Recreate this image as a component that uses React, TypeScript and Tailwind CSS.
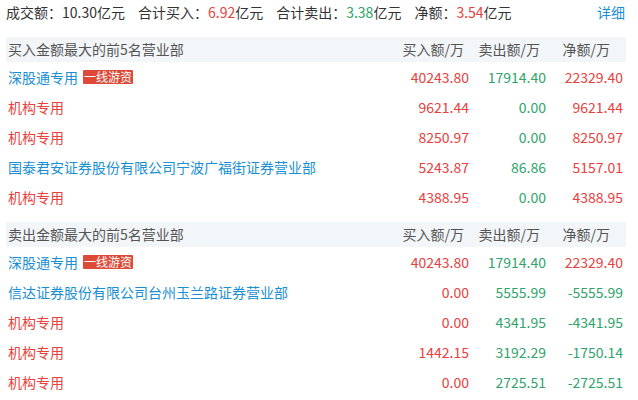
import React from 'react';

type Row = {
  name: string;
  kind: 'blue' | 'red';
  badge?: string;
  buy: string;
  sell: string;
  net: string;
};

const buyRows: Row[] = [
  { name: '深股通专用', kind: 'blue', badge: '一线游资', buy: '40243.80', sell: '17914.40', net: '22329.40' },
  { name: '机构专用', kind: 'red', buy: '9621.44', sell: '0.00', net: '9621.44' },
  { name: '机构专用', kind: 'red', buy: '8250.97', sell: '0.00', net: '8250.97' },
  { name: '国泰君安证券股份有限公司宁波广福街证券营业部', kind: 'blue', buy: '5243.87', sell: '86.86', net: '5157.01' },
  { name: '机构专用', kind: 'red', buy: '4388.95', sell: '0.00', net: '4388.95' },
];

const sellRows: Row[] = [
  { name: '深股通专用', kind: 'blue', badge: '一线游资', buy: '40243.80', sell: '17914.40', net: '22329.40' },
  { name: '信达证券股份有限公司台州玉兰路证券营业部', kind: 'blue', buy: '0.00', sell: '5555.99', net: '-5555.99' },
  { name: '机构专用', kind: 'red', buy: '0.00', sell: '4341.95', net: '-4341.95' },
  { name: '机构专用', kind: 'red', buy: '1442.15', sell: '3192.29', net: '-1750.14' },
  { name: '机构专用', kind: 'red', buy: '0.00', sell: '2725.51', net: '-2725.51' },
];

const RED = 'text-[#e8413d]';
const GREEN = 'text-[#30a46c]';

function netColor(v: string) {
  return v.startsWith('-') ? GREEN : RED;
}

function Section({ title, rows }: { title: string; rows: Row[] }) {
  return (
    <div>
      <div className="ml-[6px] mr-[12px] h-[25px] bg-[#f3f6f9] flex items-center pl-[2px] pr-[3px] text-[#555]">
        <div className="flex-1">{title}</div>
        <div className="w-[77px] text-right pr-[5px]">买入额/万</div>
        <div className="w-[77px] text-right pr-[6px]">卖出额/万</div>
        <div className="w-[77px] text-right pr-[13px]">净额/万</div>
      </div>
      <div className="pl-[8px] pr-[15px]">
        {rows.map((r, i) => (
          <div key={i} className="h-[30px] flex items-center">
            <div className="flex-1 flex items-center min-w-0">
              <span className={r.kind === 'blue' ? 'text-[#1a8fd5]' : RED}>{r.name}</span>
              {r.badge && (
                <span className="ml-[5px] bg-[#dd4a38] text-white text-[12px] leading-[14px] px-[1px] rounded-[1px]">
                  {r.badge}
                </span>
              )}
            </div>
            <div className={`w-[77px] text-right ${RED}`}>{r.buy}</div>
            <div className={`w-[77px] text-right ${GREEN}`}>{r.sell}</div>
            <div className={`w-[77px] text-right ${netColor(r.net)}`}>{r.net}</div>
          </div>
        ))}
      </div>
    </div>
  );
}

export default function App() {
  return (
    <div
      className="w-[638px] h-[400px] bg-white overflow-hidden text-[14px] text-[#333]"
      style={{ fontFamily: '"Noto Sans CJK SC", "Noto Sans", sans-serif' }}
    >
      <div className="h-[25px] flex items-center pl-[6px] pr-[13px]">
        <span>成交额：10.30亿元</span>
        <span className="ml-[13px]">
          合计买入：<span className={RED}>6.92</span>亿元
        </span>
        <span className="ml-[13px]">
          合计卖出：<span className={GREEN}>3.38</span>亿元
        </span>
        <span className="ml-[13px]">
          净额：<span className={RED}>3.54</span>亿元
        </span>
        <span className="ml-auto text-[#1a8fd5]">详细</span>
      </div>
      <div className="mt-[12px]">
        <Section title="买入金额最大的前5名营业部" rows={buyRows} />
      </div>
      <div className="mt-[10px]">
        <Section title="卖出金额最大的前5名营业部" rows={sellRows} />
      </div>
    </div>
  );
}
